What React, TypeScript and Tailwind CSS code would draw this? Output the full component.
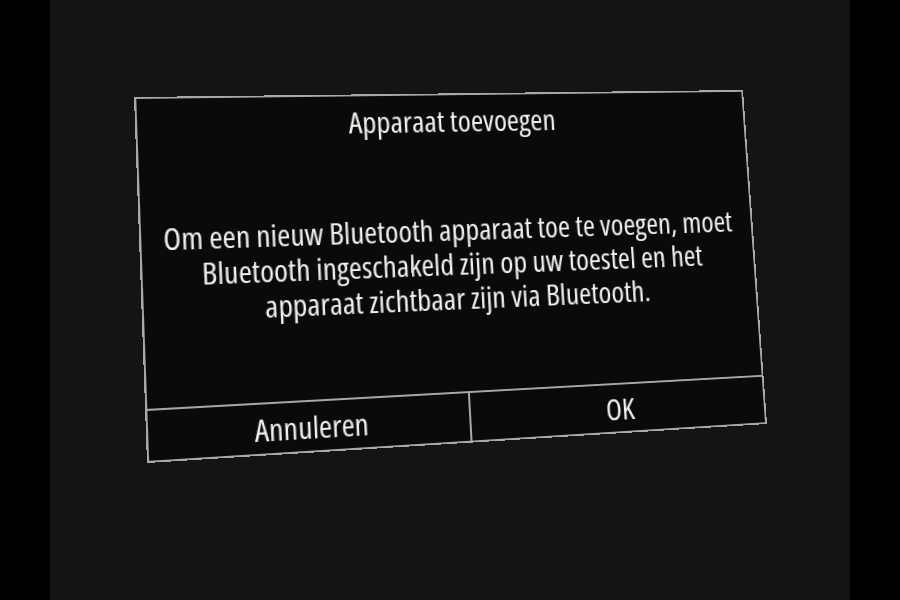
export default function App() {
  return (
    <div className="w-[900px] h-[600px] flex bg-black overflow-hidden font-['Open_Sans','Noto_Sans',sans-serif] [font-stretch:75%] font-medium">
      <div className="w-[50px] h-full bg-black" />
      <div className="flex-1 h-full bg-[#131514] overflow-hidden">
        <div className="ml-[84px] mt-[97px] w-[609px] h-[366px] origin-top-left [transform:matrix3d(1.09332,-0.012567,0,0.00015323,0.03476,0.978645,0,-0.00005834,0,0,1,0,0,0,0,1)] border-2 border-[#aaa7ab] bg-[#0a0a0b] flex flex-col text-[#f3f1ee]">
          <div className="h-[55px] flex items-center justify-center text-[30px] leading-none">
            Apparaat toevoegen
          </div>
          <div className="flex-1 flex items-center justify-center text-center text-[30px] leading-[36px] pb-[8px]">
            <p>
              Om een nieuw Bluetooth apparaat toe te voegen, moet
              <br />
              Bluetooth ingeschakeld zijn op uw toestel en het
              <br />
              apparaat zichtbaar zijn via Bluetooth.
            </p>
          </div>
          <div className="h-[51px] border-t-2 border-[#aaa7ab] flex text-[30px]">
            <div className="flex-1 flex items-center justify-center border-r-2 border-[#aaa7ab] pt-[2px]">
              Annuleren
            </div>
            <div className="flex-1 flex items-center justify-center pt-[2px]">OK</div>
          </div>
        </div>
      </div>
      <div className="w-[50px] h-full bg-black" />
    </div>
  );
}
